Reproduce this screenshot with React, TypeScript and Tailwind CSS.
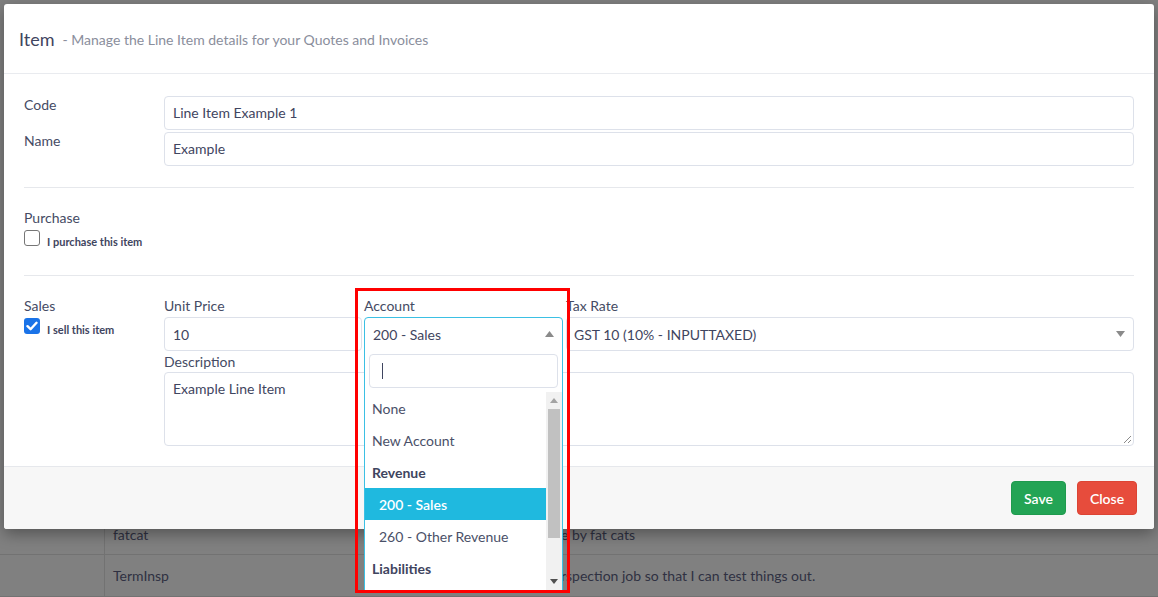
import React from "react";

const font = { fontFamily: "Lato, 'Noto Sans', sans-serif" };

function Caret({ up = false }: { up?: boolean }) {
  return (
    <svg width="9" height="6" viewBox="0 0 9 6" className="shrink-0">
      {up ? <path d="M0 6 L4.5 0 L9 6 Z" fill="#8a8a8a" /> : <path d="M0 0 L4.5 6 L9 0 Z" fill="#8a8a8a" />}
    </svg>
  );
}

function CheckBox({ checked }: { checked: boolean }) {
  if (checked)
    return (
      <div className="w-4 h-4 rounded-[3px] bg-[#1a73e8] flex items-center justify-center shrink-0">
        <svg width="12" height="10" viewBox="0 0 12 10">
          <path d="M1.5 5.2 L4.6 8.2 L10.5 1.8" stroke="white" strokeWidth="2.4" fill="none" strokeLinecap="round" strokeLinejoin="round" />
        </svg>
      </div>
    );
  return <div className="w-4 h-4 rounded-[3px] border border-[#767676] bg-white shrink-0" />;
}

export default function App() {
  return (
    <div className="relative w-[1158px] h-[597px] overflow-hidden bg-[#808080]" style={font}>
      {/* background page table (behind backdrop) */}
      <div className="pt-[514px] text-[14px] text-[#2f3142]">
        <div className="flex h-[41px] border-b border-[#727272]">
          <div className="w-[105px] border-r border-[#727272]" />
          <div className="w-[456px] pl-2 flex items-center">fatcat</div>
          <div className="flex items-center">e by fat cats</div>
        </div>
        <div className="flex h-[42px] border-b border-[#727272]">
          <div className="w-[105px] border-r border-[#727272]" />
          <div className="w-[456px] pl-2 flex items-center">TermInsp</div>
          <div className="flex items-center">rspection job so that I can test things out.</div>
        </div>
      </div>

      {/* modal */}
      <div className="absolute left-[4px] top-[4px] w-[1150px] h-[525px] bg-white rounded-[3px] shadow-[0_5px_15px_rgba(0,0,0,0.35)] flex flex-col">
        <div className="h-[70px] pt-[2px] border-b border-[#e9ebef] flex items-center px-[15px] shrink-0">
          <span className="text-[18px] text-[#3f4560]">Item</span>
          <span className="ml-[8px] text-[14px] text-[#8a8e9c]">- Manage the Line Item details for your Quotes and Invoices</span>
        </div>

        <div className="flex-1 px-5 pt-[22px] text-[14px] text-[#454b64]">
          <div className="flex">
            <div className="w-[140px] leading-[18px]">Code</div>
            <div className="flex-1 h-[34px] border border-[#dde1ea] rounded-[4px] px-2 pb-[1px] flex items-center text-[#3f4560]">Line Item Example 1</div>
          </div>
          <div className="flex mt-[2px]">
            <div className="w-[140px] leading-[18px]">Name</div>
            <div className="flex-1 h-[34px] border border-[#dde1ea] rounded-[4px] px-2 pb-[1px] flex items-center text-[#3f4560]">Example</div>
          </div>

          <div className="mt-[21px] border-t border-[#e6e8ec]" />

          <div className="pt-[20px] h-[87px]">
            <div className="leading-[20px]">Purchase</div>
            <div className="flex items-start mt-[2px]">
              <CheckBox checked={false} />
              <span className="ml-[7px] mt-[5px] text-[11px] font-bold text-[#3f4560] leading-[14px]">I purchase this item</span>
            </div>
          </div>

          <div className="border-t border-[#e6e8ec]" />

          <div className="flex pt-[20px]">
            <div className="w-[140px]">
              <div className="leading-[20px]">Sales</div>
              <div className="flex items-start mt-[2px]">
                <CheckBox checked={true} />
                <span className="ml-[7px] mt-[5px] text-[11px] font-bold text-[#3f4560] leading-[14px]">I sell this item</span>
              </div>
            </div>
            <div className="flex-1">
              <div className="flex gap-[2px]">
                <div className="w-[198px]">
                  <div className="leading-[20px]">Unit Price</div>
                  <div className="mt-[1px] h-[34px] border border-[#dde1ea] rounded-[4px] px-2 flex items-center text-[#3f4560]">10</div>
                </div>
                <div className="w-[199px]">
                  <div className="leading-[20px]">Account</div>
                  <div className="mt-[1px] h-[34px] border border-[#3bc0e4] rounded-t-[4px] px-2 flex items-center justify-between text-[#3f4560]">
                    <span>200 - Sales</span>
                    <Caret up />
                  </div>
                </div>
                <div className="flex-1 ml-[1px]">
                  <div className="leading-[20px]">Tax Rate</div>
                  <div className="mt-[1px] h-[34px] border border-[#dde1ea] rounded-[4px] pl-[7px] pr-[8px] flex items-center justify-between text-[#3f4560]">
                    <span>GST 10 (10% - INPUTTAXED)</span>
                    <Caret />
                  </div>
                </div>
              </div>
              <div className="leading-[20px] mt-[1px]">Description</div>
              <div className="relative h-[74px] border border-[#dde1ea] rounded-[4px] px-2 pt-[5px] text-[#3f4560]">
                Example Line Item
                <svg width="9" height="9" viewBox="0 0 9 9" className="absolute right-[1px] bottom-[1px]">
                  <path d="M8 1 L1 8 M8 5 L5 8" stroke="#8a8a8a" strokeWidth="1" />
                </svg>
              </div>
            </div>
          </div>
        </div>

        <div className="h-[63px] shrink-0 bg-[#f7f7f7] border-t border-[#e6e8ec] rounded-b-[3px] flex items-center justify-end gap-[11px] pr-[17px]">
          <button className="h-[34px] w-[55px] rounded-[4px] bg-[#23a455] border border-[#1f9a4e] text-white text-[14px] font-semibold">Save</button>
          <button className="h-[34px] w-[60px] rounded-[4px] bg-[#e74c3c] border border-[#dc4434] text-white text-[14px] font-semibold">Close</button>
        </div>
      </div>

      {/* open dropdown */}
      <div className="absolute left-[364px] top-[350px] w-[199px] h-[243px] bg-white border-x border-[#3bc0e4] flex flex-col text-[14px]">
        <div className="px-[4px] pt-[4px] shrink-0">
          <div className="h-[34px] border border-[#dde1ea] rounded-[4px] flex items-center pl-[12px]">
            <div className="w-[1px] h-[16px] bg-[#3f4560]" />
          </div>
        </div>
        <div className="flex flex-1 mt-[4px] min-h-0">
          <div className="flex-1 text-[#4a5068]">
            <div className="h-[32px] flex items-center pl-[7px]">None</div>
            <div className="h-[32px] flex items-center pl-[7px]">New Account</div>
            <div className="h-[32px] flex items-center pl-[7px] font-bold text-[#3f4560]">Revenue</div>
            <div className="h-[32px] flex items-center pl-[14px] bg-[#1fb9df] text-white font-semibold">200 - Sales</div>
            <div className="h-[32px] flex items-center pl-[14px]">260 - Other Revenue</div>
            <div className="h-[32px] flex items-center pl-[7px] font-bold text-[#3f4560]">Liabilities</div>
          </div>
          <div className="w-[16px] bg-[#f1f1f1] flex flex-col items-center">
            <div className="h-[17px] flex items-center justify-center">
              <svg width="8" height="5" viewBox="0 0 8 5"><path d="M0 5 L4 0 L8 5 Z" fill="#a3a3a3" /></svg>
            </div>
            <div className="w-[12px] h-[129px] bg-[#c1c1c1]" />
            <div className="flex-1" />
            <div className="h-[14px] flex items-start justify-center">
              <svg width="8" height="5" viewBox="0 0 8 5"><path d="M0 0 L4 5 L8 0 Z" fill="#505050" /></svg>
            </div>
          </div>
        </div>
      </div>

      {/* annotation */}
      <div className="absolute left-[355px] top-[288px] w-[215px] h-[305px] border-[3px] border-[#ff0000]" />
    </div>
  );
}
